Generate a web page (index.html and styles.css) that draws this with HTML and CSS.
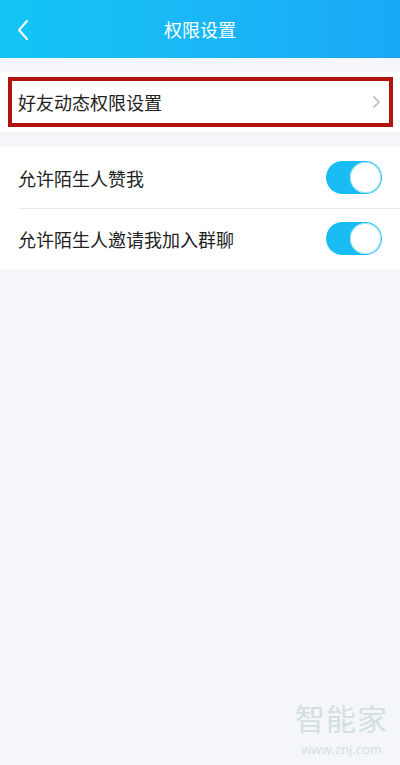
FILE: index.html
```html
<!DOCTYPE html>
<html lang="zh">

<head>
    <meta charset="UTF-8" />
    <meta name="viewport" content="width=device-width, initial-scale=1.0" />
    <title>权限设置</title>
    <link rel="stylesheet" href="styles.css">
</head>

<body>
    <header class="topbar">
        <span class="back">
            <svg width="14" height="22" viewBox="0 0 14 22"><path d="M11 2 L3 11 L11 20" fill="none" stroke="#fff" stroke-width="2" stroke-linecap="round" stroke-linejoin="round"/></svg>
        </span>
        <h1>权限设置</h1>
    </header>

    <main>
        <section class="group">
            <div class="row boxed">
                <div class="mark">
                    <span class="label">好友动态权限设置</span>
                    <svg class="chev" width="9" height="14" viewBox="0 0 9 14"><path d="M1.5 1.5 L7 7 L1.5 12.5" fill="none" stroke="#b9b9b9" stroke-width="1.5"/></svg>
                </div>
            </div>
        </section>

        <section class="group">
            <div class="row">
                <span class="label">允许陌生人赞我</span>
                <span class="toggle on"><span class="knob"></span></span>
            </div>
            <div class="row">
                <span class="label">允许陌生人邀请我加入群聊</span>
                <span class="toggle on"><span class="knob"></span></span>
            </div>
        </section>
    </main>

    <div class="watermark">
        <div class="wm-big">智能家</div>
        <div class="wm-url">www.znj.com</div>
    </div>
</body>

</html>
```

FILE: styles.css
```css
body {
    margin: 0;
    padding: 0;
    height: 765px;
    overflow: hidden;
    background: #f5f6fa;
    font-family: "Noto Sans CJK SC", "Noto Sans", sans-serif;
    color: #222;
    position: relative;
}

.topbar {
    height: 58px;
    background: linear-gradient(90deg, #14c5f7 0%, #1ab7f6 50%, #1aa8f6 100%);
    display: flex;
    align-items: center;
    justify-content: center;
    position: relative;
}

.topbar h1 {
    margin: 0;
    font-size: 18px;
    font-weight: 400;
    color: #fff;
}

.back {
    position: absolute;
    left: 16px;
    top: 19px;
    display: flex;
}

main {
    padding-top: 14px;
}

.group {
    background: #fff;
    margin-bottom: 15px;
}

.row {
    height: 61px;
    display: flex;
    align-items: center;
    justify-content: space-between;
    padding: 0 18px;
    position: relative;
}

.row + .row::before {
    content: "";
    position: absolute;
    left: 18px;
    right: 0;
    top: 0;
    border-top: 1px solid #ebebeb;
}

.label {
    font-size: 18px;
    line-height: 1;
}

.row.boxed {
    height: 60px;
    padding: 5px 7px 5px 8px;
    box-sizing: border-box;
}

.mark {
    flex: 1;
    align-self: stretch;
    border: 4px solid #b3130e;
    display: flex;
    align-items: center;
    justify-content: space-between;
    padding: 0 8px 0 6px;
}

.toggle {
    width: 56px;
    height: 33px;
    border-radius: 17px;
    background: #19bdf4;
    display: flex;
    align-items: center;
    justify-content: flex-end;
    padding: 1px;
    box-sizing: border-box;
}

.knob {
    width: 31px;
    height: 31px;
    border-radius: 50%;
    background: #fff;
    box-shadow: inset 0 0 0 1px #a9e2f7;
}

.watermark {
    position: absolute;
    right: 12px;
    bottom: 8px;
    display: flex;
    flex-direction: column;
    align-items: center;
    gap: 10px;
    color: #d3dfe2;
}

.wm-big {
    font-size: 30px;
    letter-spacing: 1px;
    line-height: 30px;
}

.wm-url {
    font-family: "Open Sans", sans-serif;
    font-size: 13px;
    line-height: 15px;
}
```
